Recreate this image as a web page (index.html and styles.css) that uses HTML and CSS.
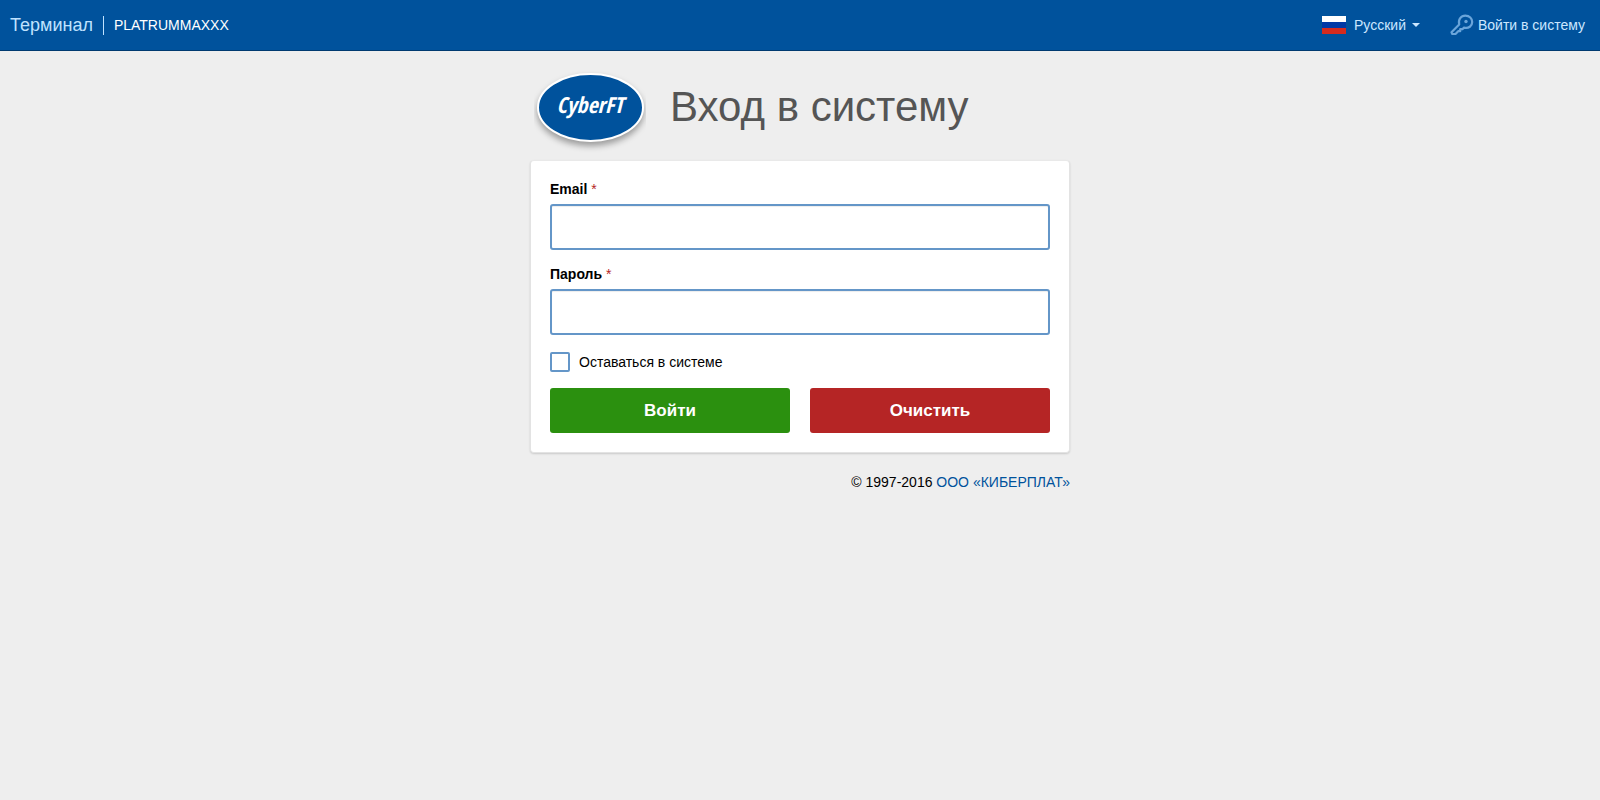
FILE: index.html
```
<!DOCTYPE html>
<html lang="ru">
<head>
<meta charset="utf-8">
<meta name="viewport" content="width=device-width, initial-scale=1">
<title>Вход в систему</title>
<link rel="stylesheet" href="styles.css">
</head>
<body>
<header class="navbar">
  <div class="brand">
    <a class="brand-name" href="#">Терминал</a>
    <span class="terminal-id">PLATRUMMAXXX</span>
  </div>
  <nav class="nav-links">
    <a class="nav-link language" href="#">
      <svg class="flag" width="24" height="18" viewBox="0 0 24 18" aria-hidden="true">
        <rect width="24" height="6" fill="#fff"/>
        <rect y="6" width="24" height="6" fill="#0039a6"/>
        <rect y="12" width="24" height="6" fill="#d52b1e"/>
      </svg>
      <span>Русский</span>
      <span class="caret"></span>
    </a>
    <a class="nav-link login-link" href="#">
      <svg class="key" width="24" height="22" viewBox="0 0 24 22" fill="none" stroke="#6aa5da" stroke-width="2.200" stroke-linejoin="round" aria-hidden="true">
        <path d="M9.2 10.4C8 5.500 11 1.700 15.300 1.700C19.500 1.700 22.200 4.600 22.200 8C22.200 12 18.700 14.800 14 13.600L12.400 15.200H10.200V17.200H8.200L5.500 20H2.300L1.500 18.200Z"/>
        <circle cx="16" cy="7.500" r="1.700" fill="#6aa5da" stroke="none"/>
      </svg>
      <span>Войти в систему</span>
    </a>
  </nav>
</header>
<main class="login">
  <div class="login-head">
    <svg class="logo" width="112" height="84" viewBox="0 0 112 84" role="img" aria-label="CyberFT">
      <ellipse class="logo-oval" cx="56.500" cy="37.500" rx="52.500" ry="33.500"/>
      <text class="logo-text" x="56" y="43" text-anchor="middle">CyberFT</text>
    </svg>
    <h1 class="title">Вход в систему</h1>
  </div>
  <form class="card">
    <div class="field">
      <label class="label" for="email">Email <span class="required">*</span></label>
      <input class="input" id="email" type="email">
    </div>
    <div class="field">
      <label class="label" for="password">Пароль <span class="required">*</span></label>
      <input class="input" id="password" type="password">
    </div>
    <div class="remember">
      <input class="checkbox" id="remember" type="checkbox">
      <label class="remember-label" for="remember">Оставаться в системе</label>
    </div>
    <div class="actions">
      <button class="button button-submit" type="submit">Войти</button>
      <button class="button button-reset" type="reset">Очистить</button>
    </div>
  </form>
  <footer class="copyright">© 1997-2016 <a href="#">ООО «КИБЕРПЛАТ»</a></footer>
</main>
</body>
</html>
```
FILE: styles.css
```
* {
  box-sizing: border-box;
}

body {
  margin: 0;
  background: #eee;
  color: #000;
  font-family: "Liberation Sans", Arial, sans-serif;
  font-size: 14px;
  line-height: 20px;
}

a {
  color: #00529c;
  text-decoration: none;
}

.navbar {
  display: flex;
  justify-content: space-between;
  align-items: center;
  min-height: 51px;
  padding: 0 15px 0 10px;
  background: #00529c;
  border-bottom: 1px solid #003a70;
}

.brand,
.nav-links,
.nav-link {
  display: flex;
  align-items: center;
}

.brand-name {
  padding-right: 10px;
  color: #bfe2ff;
  font-size: 18px;
}

.terminal-id {
  padding-left: 10px;
  border-left: 1px solid #bfe2ff;
  color: #fff;
  line-height: 19px;
}

.nav-links {
  gap: 30px;
}

.nav-link {
  color: #cce7ff;
}

.flag {
  margin-right: 8px;
}

.caret {
  margin-left: 6px;
  border: 4px solid transparent;
  border-top-color: currentColor;
  border-bottom: 0;
}

.key {
  margin-right: 4px;
}

.login {
  width: 100%;
  max-width: 540px;
  margin: 0 auto;
}

.login-head {
  display: flex;
  align-items: center;
  gap: 24px;
  padding: 19px 0 6px 4px;
}

.logo {
  flex: none;
}

.logo-oval {
  fill: #00529c;
  stroke: #fff;
  stroke-width: 2px;
  filter: drop-shadow(0 4px 3px rgba(0, 0, 0, 0.35));
}

.logo-text {
  fill: #fff;
  font-family: "Open Sans Condensed", "Liberation Sans Narrow", "Liberation Sans", sans-serif;
  font-size: 22px;
  font-style: italic;
  font-weight: bold;
}

.title {
  margin: 0 0 10px;
  color: #555;
  font-size: 42px;
  font-weight: normal;
  line-height: 46px;
}

.card {
  padding: 18px 19px 19px;
  background: #fff;
  border: 1px solid #e3e3e3;
  border-top-color: #e9e9e9;
  border-radius: 4px;
  box-shadow: 0 1px 2px rgba(0, 0, 0, 0.15);
}

.field {
  margin-bottom: 14px;
}

.label {
  display: block;
  margin-bottom: 5px;
  font-weight: bold;
}

.required {
  color: #b52525;
  font-weight: normal;
}

.input {
  display: block;
  width: 100%;
  height: 46px;
  padding: 10px 16px;
  background: #fff;
  border: 2px solid #6496c8;
  border-radius: 3px;
  box-shadow: inset 0 1px 1px rgba(0, 0, 0, 0.075);
  font: inherit;
  font-size: 18px;
}

.remember {
  display: flex;
  align-items: center;
  gap: 9px;
  padding-top: 3px;
  margin-bottom: 16px;
}

.remember-label {
  line-height: 20px;
}

.checkbox {
  appearance: none;
  width: 20px;
  height: 20px;
  margin: 0;
  background: #fff;
  border: 2px solid #6496c8;
  border-radius: 2px;
}

.checkbox:checked {
  background: #6496c8;
}

.actions {
  display: grid;
  grid-template-columns: 1fr 1fr;
  gap: 20px;
}

.button {
  height: 45px;
  padding: 0 16px;
  border: 0;
  border-radius: 3px;
  color: #fff;
  font: bold 17px "Liberation Sans", Arial, sans-serif;
  cursor: pointer;
}

.button-submit {
  background: #2b900f;
}

.button-reset {
  background: #b52525;
}

.copyright {
  margin-top: 19px;
  text-align: right;
}
```
